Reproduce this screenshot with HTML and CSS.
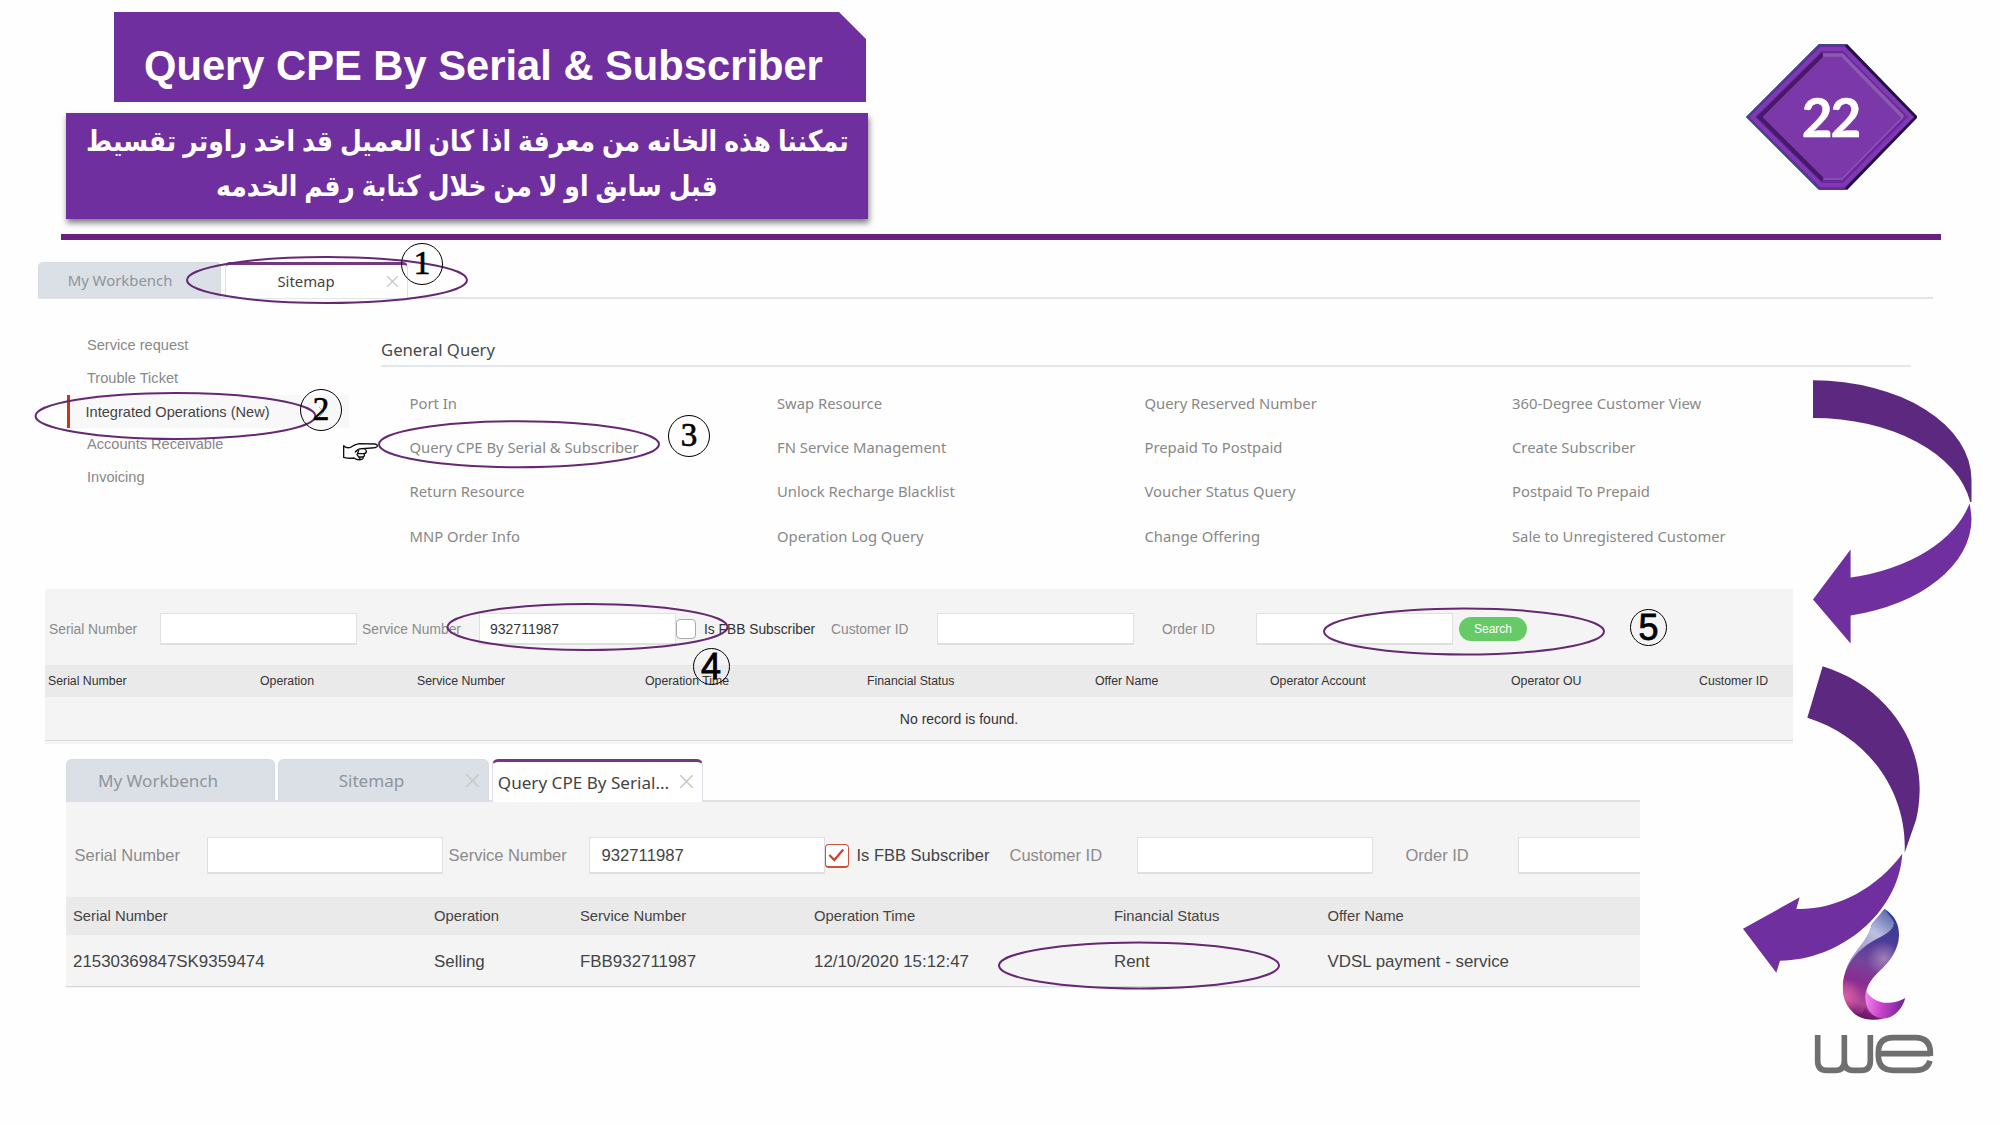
FILE: index.html
```html
<!DOCTYPE html>
<html lang="en">
<head>
<meta charset="utf-8">
<title>Query CPE By Serial &amp; Subscriber</title>
<link rel="stylesheet" href="styles.css">
</head>
<body>
<main class="slide">
  <header class="head">
    <div class="titles">
      <h1 class="title">Query CPE By Serial &amp; Subscriber</h1>
      <p class="note" dir="rtl" lang="ar"><span class="note-a">تمكننا هذه الخانه من معرفة اذا كان العميل قد اخد راوتر تقسيط</span><span class="note-b">قبل سابق او لا من خلال كتابة رقم الخدمه</span></p>
    </div>
    <div class="badge">
      <svg viewBox="0 0 171 146" width="171" height="146">
        <polygon points="0,73 73,0 100,0 171,73 100,146 73,146" fill="#6a2a9c"/>
        <polyline points="73,145 1,73 73,1 100,1" fill="none" stroke="#34507f" stroke-width="1.5"/>
        <polyline points="100,1 170,73 100,145" fill="none" stroke="#231345" stroke-width="3"/>
        <polygon points="6,73 75,5 98,5 165,73 98,141 75,141" fill="none" stroke="#8038b4" stroke-width="4"/>
        <polygon points="13,73 77,10 96,10 158,73 96,136 77,136" fill="#7b38a9"/>
        <polyline points="77,136 13.500,73 77,10" fill="none" stroke="#451a68" stroke-width="4"/>
        <polyline points="77,11 96,11 157,73" fill="none" stroke="#8c5aae" stroke-width="3.500"/>
        <polyline points="157,73 96,135 77,135" fill="none" stroke="#9150bd" stroke-width="1.500"/>
      </svg>
      <span class="badge-num">22</span>
    </div>
  </header>

  <section class="sitemap">
    <div class="tabs tabs-top">
      <div class="tab">My Workbench</div>
      <div class="tab tab-on">Sitemap<svg class="x" viewBox="0 0 10 10"><path d="M0 0L10 10M10 0L0 10"/></svg></div>
    </div>
    <div class="body">
      <nav class="side">
        <a>Service request</a>
        <a>Trouble Ticket</a>
        <a class="on">Integrated Operations (New)<svg class="chev" viewBox="0 0 7 12"><path d="M1 1L6 6L1 11"/></svg></a>
        <a>Accounts Receivable</a>
        <a>Invoicing</a>
      </nav>
      <div class="query">
        <h2>General Query</h2>
        <div class="links">
          <a>Port In</a><a>Swap Resource</a><a>Query Reserved Number</a><a>360-Degree Customer View</a>
          <a>Query CPE By Serial &amp; Subscriber</a><a>FN Service Management</a><a>Prepaid To Postpaid</a><a>Create Subscriber</a>
          <a>Return Resource</a><a>Unlock Recharge Blacklist</a><a>Voucher Status Query</a><a>Postpaid To Prepaid</a>
          <a>MNP Order Info</a><a>Operation Log Query</a><a>Change Offering</a><a>Sale to Unregistered Customer</a>
        </div>
      </div>
    </div>
  </section>

  <section class="panel panel-a">
    <div class="form">
      <label>Serial Number</label><div class="input"></div>
      <label>Service Number</label><div class="input">932711987</div>
      <i class="check"></i><span class="dark">Is FBB Subscriber</span>
      <label>Customer ID</label><div class="input"></div>
      <label>Order ID</label><div class="input"></div>
      <button class="search">Search</button>
    </div>
    <div class="row row-head">
      <span>Serial Number</span><span>Operation</span><span>Service Number</span><span>Operation Time</span><span>Financial Status</span><span>Offer Name</span><span>Operator Account</span><span>Operator OU</span><span>Customer ID</span>
    </div>
    <div class="empty">No record is found.</div>
  </section>

  <section class="result">
    <div class="tabs tabs-low">
      <div class="tab">My Workbench</div>
      <div class="tab tab-mid">Sitemap<svg class="x" viewBox="0 0 10 10"><path d="M0 0L10 10M10 0L0 10"/></svg></div>
      <div class="tab tab-on">Query CPE By Serial...<svg class="x" viewBox="0 0 10 10"><path d="M0 0L10 10M10 0L0 10"/></svg></div>
    </div>
    <div class="panel panel-b">
      <div class="form">
        <label>Serial Number</label><div class="input"></div>
        <label>Service Number</label><div class="input">932711987</div>
        <i class="check checked"><svg viewBox="0 0 18 18"><path d="M3 9L7.500 13.500L15.500 4"/></svg></i><span class="dark">Is FBB Subscriber</span>
        <label>Customer ID</label><div class="input"></div>
        <label>Order ID</label><div class="input cut"></div>
      </div>
      <div class="row row-head">
        <span>Serial Number</span><span>Operation</span><span>Service Number</span><span>Operation Time</span><span>Financial Status</span><span>Offer Name</span>
      </div>
      <div class="row row-data">
        <span>21530369847SK9359474</span><span>Selling</span><span>FBB932711987</span><span>12/10/2020 15:12:47</span><span>Rent</span><span>VDSL payment - service</span>
      </div>
    </div>
  </section>

  <!-- annotations drawn over the screens -->
  <svg class="marks" viewBox="0 0 2000 1125">
    <defs>
      <linearGradient id="ribbon" gradientUnits="userSpaceOnUse" x1="235" y1="40" x2="130" y2="350">
        <stop offset="0" stop-color="#2f3b8c"/><stop offset=".25" stop-color="#4b3c98"/><stop offset=".5" stop-color="#76449c"/><stop offset=".68" stop-color="#8a2c92"/><stop offset=".86" stop-color="#b04796"/><stop offset="1" stop-color="#741672"/>
      </linearGradient>
      <radialGradient id="glow" gradientUnits="userSpaceOnUse" cx="222" cy="176" r="52">
        <stop offset="0" stop-color="#b394c4" stop-opacity=".75"/><stop offset="1" stop-color="#b394c4" stop-opacity="0"/>
      </radialGradient>
      <radialGradient id="pink" gradientUnits="userSpaceOnUse" cx="106" cy="288" r="50">
        <stop offset="0" stop-color="#df62a4" stop-opacity=".9"/><stop offset="1" stop-color="#df62a4" stop-opacity="0"/>
      </radialGradient>
      <linearGradient id="tail" gradientUnits="userSpaceOnUse" x1="165" y1="290" x2="285" y2="310">
        <stop offset="0" stop-color="#f08af0"/><stop offset=".4" stop-color="#cf48cb"/><stop offset="1" stop-color="#6a2496"/>
      </linearGradient>
      <linearGradient id="fold" gradientUnits="userSpaceOnUse" x1="240" y1="40" x2="125" y2="180">
        <stop offset="0" stop-color="#5d6bae"/><stop offset=".4" stop-color="#bdbfe2"/><stop offset="1" stop-color="#9a8fc8"/>
      </linearGradient>
      <clipPath id="body"><path d="M224 27C256 48 268 75 267 108C265 150 240 184 208 214C190 232 174 250 169 274C164 308 180 338 219 356C190 363 150 360 128 336C98 307 92 262 104 222C112 192 136 160 158 130C178 104 182 84 186 72Z"/></clipPath>
    </defs>
    <g class="ovals">
      <ellipse cx="327" cy="280" rx="140" ry="23"/>
      <ellipse cx="175.500" cy="416" rx="140" ry="23"/>
      <ellipse cx="519" cy="444.300" rx="140" ry="23"/>
      <ellipse cx="587.500" cy="627" rx="140" ry="23"/>
      <ellipse cx="1464" cy="631.500" rx="140" ry="23"/>
      <ellipse cx="1139" cy="965.500" rx="140" ry="23"/>
    </g>
    <path fill="#5c2880" d="M1813 380.300A158.500 99.500 0 0 1 1971.500 480V502H1970.300A158.500 99.500 0 0 0 1813 418Z"/>
    <path fill="#702f9e" d="M1969.500 503.500A158.500 99.500 0 0 1 1850.600 577.500V549.500L1813 599.500L1850.600 643.500V615.500A158.500 99.500 0 0 0 1971.500 519Q1971 510 1969.500 503.500Z"/>
    <g transform="translate(1720 650) scale(.33333)">
      <path fill="#5c2880" d="M308 49C490 105 600 260 599 420Q598 470 588 510L554 608C562 430 450 262 262 203Z"/>
      <path fill="#702f9e" d="M547 611C535 790 360 930 180 932L169 968L69 836L239 742L229 777C350 780 470 715 547 611Z"/>
    </g>
    <g transform="translate(1810 900) scale(.33333)">
      <g clip-path="url(#body)">
        <rect x="90" y="20" width="200" height="345" fill="url(#ribbon)"/>
        <rect x="90" y="20" width="200" height="345" fill="url(#glow)"/>
        <rect x="90" y="20" width="200" height="345" fill="url(#pink)"/>
      </g>
      <path fill="url(#fold)" d="M224 27L186 72C182 90 174 104 158 128C136 158 118 178 110 204C132 166 160 138 198 118C236 98 258 84 250 62Z"/>
      <path fill="url(#tail)" d="M168 272C184 298 208 310 238 308C258 307 272 302 286 294C276 330 250 357 212 356C176 346 160 312 168 272Z"/>
      <path fill="#65105e" d="M128 336C150 358 190 362 222 355C190 352 175 342 165 322C160 345 145 345 128 336Z" opacity=".55"/>
      <g fill="none" stroke="#6f6f6f" stroke-width="17">
        <path d="M23 405V482Q23 511 50 511H76Q103 511 103 482V405M103 482Q103 511 130 511H154Q181 511 181 482V405"/>
        <path d="M206 461H361M361 468V459Q361 413 316 413H250Q205 413 205 458V466Q205 511 250 511H316Q352 511 360 482"/>
      </g>
    </g>
    <g transform="translate(290 380) scale(.33333)" fill="#fff" stroke="#111" stroke-width="4" stroke-linejoin="round" stroke-linecap="round">
      <path d="M161 197Q170 206 182 202Q194 193 208 191L255 192Q264 194 262 199Q258 204 245 204L216 206Q228 207 229 213Q230 219 222 221Q226 227 219 231Q222 237 212 239Q200 240 192 234Q176 236 161 232Z"/>
      <path fill="none" d="M216 206Q204 205 196 216M222 221H206M219 231H206M206 212L201 224L210 236"/>
    </g>
  </svg>
  <b class="num n1">1</b><b class="num n2">2</b><b class="num n3">3</b><b class="num sans n4">4</b><b class="num sans n5">5</b>
</main>
</body>
</html>
```
FILE: styles.css
```css
* { box-sizing: border-box; }
body {
  margin: 0;
  background: #fefefe;
  font-family: "Liberation Sans", Arial, sans-serif;
}
.slide {
  position: relative;
  width: 2000px;
  height: 1125px;
  overflow: hidden;
}

/* heading */
.head {
  display: flex;
  justify-content: space-between;
  height: 240px;
  margin: 0 59px 0 61px;
  padding: 12px 24px 0 5px;
  border-bottom: 6px solid #6b207e;
}
.title {
  width: 752px;
  height: 90px;
  margin: 0 0 11px 48px;
  padding-left: 30px;
  background: #702f9e;
  clip-path: polygon(0 0, 725px 0, 100% 27px, 100% 100%, 0 100%);
  color: #fff;
  font-size: 41.700px;
  line-height: 107px;
  white-space: nowrap;
}
.note {
  display: flex;
  flex-direction: column;
  align-items: center;
  width: 802px;
  height: 106px;
  margin: 0;
  padding-top: 6px;
  background: #702f9e;
  box-shadow: 1px 4px 6px rgba(0, 0, 0, .5);
  color: #fff;
  font-family: "Liberation Serif", "DejaVu Sans Condensed", "DejaVu Sans", serif;
  font-weight: bold;
  font-size: 29px;
  line-height: 45px;
  white-space: nowrap;
}
.note span { transform: scaleX(.962); }
.badge {
  position: relative;
  width: 171px;
  height: 146px;
  margin-top: 32px;
}
.badge svg { display: block; }
.badge-num {
  position: absolute;
  left: 0;
  top: 41px;
  width: 169px;
  text-align: center;
  color: #fff;
  font: bold 53px/64px Lato, sans-serif;
  letter-spacing: -2px;
  -webkit-text-stroke: .5px #fff;
}

/* tabs */
.tabs {
  display: flex;
  align-items: flex-end;
  font-family: "Noto Sans", sans-serif;
  color: #8f959b;
}
.tab {
  display: flex;
  align-items: center;
  justify-content: center;
  position: relative;
  background: #dbe0e7;
  border: 1px solid #d6dbe1;
  border-bottom: 0;
  border-radius: 5px 5px 0 0;
  white-space: nowrap;
}
.tab-on {
  background: #fff;
  color: #444;
  border-color: #dcdfe6;
  border-top: 3px solid #74387f;
}
.x {
  position: absolute;
  fill: none;
  stroke: #c8c8c8;
  stroke-width: 1.200;
}
.tabs-top {
  width: 1895px;
  height: 37px;
  margin: 22px 0 0 38px;
  gap: 4px;
  border-bottom: 2px solid #e1e4ea;
  font-size: 14.900px;
}
.tabs-top .tab { width: 183px; height: 36px; margin-bottom: -1px; padding: 0 19px 1px 0; }
.tabs-top .tab-on { padding: 0 25px 1px 4px; }
.tabs-top .x { width: 11px; height: 11px; right: 9px; top: 11px; }

/* sitemap */
.body {
  display: flex;
  height: 290px;
}
.side {
  width: 282px;
  margin: 30px 32px 0 67px;
  font-size: 14.600px;
}
.side a {
  display: block;
  height: 33px;
  padding-left: 20px;
  line-height: 32px;
  color: #888;
}
.side .on {
  display: flex;
  align-items: center;
  justify-content: space-between;
  padding: 0 24px 0 15.500px;
  background: #f8f8f8;
  border-left: 3px solid #c5351f;
  color: #444;
}
.chev { width: 7px; height: 12px; fill: none; stroke: #aaa; }
.query { width: 1530px; padding-top: 34px; font-family: "Noto Sans", sans-serif; }
.query h2 {
  height: 34px;
  margin: 0;
  border-bottom: 2px solid #e3e8ed;
  color: #4a4a4a;
  font-size: 16.700px;
  font-weight: normal;
  line-height: 34px;
}
.links {
  display: grid;
  grid-template-columns: 367.500px 367.500px 367.500px auto;
  grid-auto-rows: 44.200px;
  margin: 14px 0 0 28.500px;
  color: #888;
  font-size: 14.800px;
  line-height: 44px;
  white-space: nowrap;
}

/* form panels */
.panel { background: #f4f4f4; color: #333; }
.form {
  display: grid;
  align-items: center;
  white-space: nowrap;
}
.form label { color: #8b8b8b; }
.input { background: #fff; border: 1px solid #e0e0e0; border-bottom-width: 2px; }
.check { display: block; background: #fff; border: 1.500px solid #aaa; border-radius: 4px; }
.row { display: grid; align-items: center; white-space: nowrap; }
.row-head { background: #eaeaea; }

.panel-a {
  width: 1748px;
  height: 155px;
  margin-left: 45px;
}
.panel-a .form {
  grid-template-columns: 111px 202px 117px 197px 28px 127px 106px 225px 94px 203px 68px;
  height: 76px;
  padding: 4px 0 0 4px;
  font-size: 13.800px;
}
.panel-a .input { width: 197px; height: 32px; padding-left: 10px; font-size: 14px; line-height: 30px; }
.panel-a .check { width: 20px; height: 20px; }
.search {
  width: 68px;
  height: 24px;
  padding: 0;
  border: 0;
  border-radius: 12px;
  background: #66cb66;
  color: #fff;
  font: 12px "Liberation Sans", sans-serif;
}
.panel-a .row-head {
  grid-template-columns: 212px 157px 228px 222px 228px 175px 241px 188px auto;
  height: 32px;
  padding-left: 3px;
  font-size: 12.300px;
}
.empty {
  height: 44px;
  padding-right: 0;
  padding-left: 80px;
  border-bottom: 1px solid #d9d9d9;
  font-size: 14px;
  line-height: 44px;
  text-align: center;
}

/* result screen */
.result { width: 1574px; margin: 15px 0 0 66px; }
.tabs-low {
  height: 43px;
  gap: 3px;
  border-bottom: 2px solid #dee1e6;
  font-size: 17.100px;
}
.tabs-low .tab { width: 209px; height: 42px; margin-bottom: -1px; padding-right: 25px; border-radius: 6px 6px 0 0; }
.tabs-low .tab-mid { width: 211px; padding-right: 24px; }
.tabs-low .tab-on { width: 211px; margin-bottom: -2px; height: 43px; padding: 0 28px 0 0; }
.tabs-low .x { width: 13px; height: 13px; right: 9px; top: 14px; }
.tabs-low .tab-on .x { top: 13px; }
.panel-b { height: 186px; overflow: hidden; color: #444; }
.panel-b .form {
  grid-template-columns: 132px 242px 140px 236px 32px 153px 127px 269px 112px 122px;
  height: 95px;
  padding: 14px 0 2px 8.500px;
  font-size: 16.500px;
}
.panel-b .input { width: 236px; height: 37px; padding-left: 12px; font-size: 16.700px; line-height: 35px; }
.panel-b .cut { width: 122px; border-right: 0; }
.checked { width: 24px; height: 24px; border-color: #d0503c; border-bottom-width: 2px; }
.checked svg { display: block; width: 20px; height: 20px; fill: none; stroke: #d0412c; stroke-width: 2; }
.panel-b .row { grid-template-columns: 361px 146px 234px 300px 213.500px auto; padding-left: 7px; }
.panel-b .row-head { height: 38px; font-size: 14.800px; }
.panel-b .row-data { height: 52px; padding-top: 3px; border-bottom: 1px solid #d5d7da; font-size: 16.900px; }

/* annotations */
.marks { position: absolute; left: 0; top: 0; width: 2000px; height: 1125px; }
.ovals { fill: none; stroke: #662872; stroke-width: 2; }
.num {
  position: absolute;
  width: 42px;
  height: 42px;
  border: 1.500px solid #000;
  border-radius: 50%;
  color: #000;
  font: normal 33px/39px "Liberation Serif", serif;
  text-align: center;
  -webkit-text-stroke: .7px #000;
}
.n1 { left: 401px; top: 243px; }
.n2 { left: 300px; top: 389px; }
.n3 { left: 668px; top: 415px; }
.sans { width: 37px; height: 37px; font: normal 36px/35px "Liberation Sans", sans-serif; -webkit-text-stroke: .8px #000; }
.n4 { left: 692.500px; top: 648px; }
.n5 { left: 1630px; top: 609px; }
```
